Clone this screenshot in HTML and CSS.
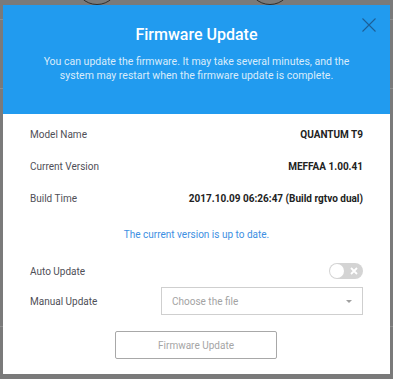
FILE: index.html
```html
<!DOCTYPE html>
<html lang="en">
<head>
<meta charset="utf-8">
<title>Firmware Update</title>
<link rel="stylesheet" href="styles.css">
</head>
<body>
<div class="backdrop" aria-hidden="true">
  <span class="ring ring-a"></span>
  <span class="ring ring-b"></span>
</div>
<div class="modal">
  <div class="modal-head">
    <h1 class="title">Firmware Update</h1>
    <p class="subtitle">You can update the firmware. It may take several minutes, and the system may restart when the firmware update is complete.</p>
    <button class="close" aria-label="Close">
      <svg width="14" height="14" viewBox="0 0 14 14"><path d="M0.5 0.5L13.5 13.5M13.5 0.5L0.5 13.5" stroke="#1d5f98" stroke-width="1.1" fill="none"/></svg>
    </button>
  </div>
  <div class="modal-body">
    <div class="info-row"><span class="label">Model Name</span><span class="value">QUANTUM T9</span></div>
    <div class="info-row"><span class="label">Current Version</span><span class="value">MEFFAA 1.00.41</span></div>
    <div class="info-row"><span class="label">Build Time</span><span class="value">2017.10.09 06:26:47 (Build rgtvo dual)</span></div>
    <p class="status">The current version is up to date.</p>
    <div class="form-row auto-row">
      <span class="label">Auto Update</span>
      <span class="toggle"><span class="knob"></span>
        <svg class="toggle-x" width="8" height="8" viewBox="0 0 8 8"><path d="M1 1L7 7M7 1L1 7" stroke="#fff" stroke-width="1.8" fill="none"/></svg>
      </span>
    </div>
    <div class="form-row manual-row">
      <span class="label">Manual Update</span>
      <div class="select"><span>Choose the file</span><span class="caret"></span></div>
    </div>
    <div class="actions"><button class="update-btn">Firmware Update</button></div>
  </div>
</div>
</body>
</html>
```
FILE: styles.css
```css
html, body { margin: 0; padding: 0; }
body {
  width: 393px;
  height: 379px;
  background-color: #7a7a7a;
  background-image:
    linear-gradient(#8e8e8e, #8e8e8e),
    linear-gradient(#8e8e8e, #8e8e8e),
    linear-gradient(#8e8e8e, #8e8e8e);
  background-size: 100% 1px;
  background-position: 0 19px, 0 88px, 0 326px;
  background-repeat: no-repeat;
  font-family: Roboto, "Liberation Sans", sans-serif;
  position: relative;
  overflow: hidden;
  padding: 5px 0 0 3px;
  box-sizing: border-box;
}
.backdrop { position: absolute; inset: 0; }
.ring {
  position: absolute;
  width: 42px;
  height: 42px;
  border: 1.5px solid #2e2e2e;
  border-radius: 50%;
  top: -39px;
}
.ring-a { left: 75px; }
.ring-b { left: 248px; }
.modal {
  position: relative;
  width: 387px;
  height: 369px;
  background: #fff;
  box-sizing: border-box;
}
.modal-head {
  position: relative;
  height: 109px;
  background: #219bef;
  text-align: center;
  padding-top: 20px;
  box-sizing: border-box;
}
.title {
  margin: 0;
  font-size: 16px;
  line-height: 20px;
  font-weight: 500;
  color: #fff;
}
.subtitle {
  margin: 10px auto 0;
  width: 330px;
  font-size: 10.5px;
  line-height: 14px;
  color: #d9ecfb;
}
.close {
  position: absolute;
  top: 13px;
  right: 14px;
  width: 14px;
  height: 14px;
  padding: 0;
  border: 0;
  background: none;
  display: flex;
}
.modal-body { padding: 4px 27px 15px 27px; }
.info-row {
  display: flex;
  justify-content: space-between;
  align-items: center;
  height: 32px;
}
.label { font-size: 10px; color: #4f4f57; }
.value { font-size: 10px; font-weight: 700; color: #222; }
.status {
  margin: 14px 0 0;
  text-align: center;
  font-size: 10px;
  line-height: 14px;
  color: #3d8fe2;
}
.form-row {
  display: grid;
  grid-template-columns: 131px 1fr;
  align-items: center;
}
.auto-row { margin-top: 15px; height: 28px; }
.manual-row { margin-top: 2px; }
.toggle {
  justify-self: end;
  width: 34px;
  height: 16px;
  border-radius: 8px;
  background: #d4d4d4;
  display: flex;
  align-items: center;
  justify-content: space-between;
  padding: 0 5px 0 1px;
  box-sizing: border-box;
}
.knob { width: 14px; height: 14px; border-radius: 50%; background: #fff; }
.toggle-x { display: block; }
.select {
  height: 28px;
  border: 1px solid #cfcfcf;
  box-sizing: border-box;
  display: flex;
  align-items: center;
  justify-content: space-between;
  padding: 0 10px 0 10px;
  font-size: 10px;
  color: #a3a3a3;
}
.caret {
  width: 0; height: 0;
  border-left: 3.5px solid transparent;
  border-right: 3.5px solid transparent;
  border-top: 3.5px solid #a0a0a0;
}
.actions { display: flex; justify-content: center; margin-top: 16px; }
.update-btn {
  width: 162px;
  height: 28px;
  border: 1px solid #a8a8a8;
  border-radius: 2px;
  background: #fff;
  font-family: inherit;
  font-size: 10px;
  color: #a5a5a5;
  margin-left: -1px;
}
```
